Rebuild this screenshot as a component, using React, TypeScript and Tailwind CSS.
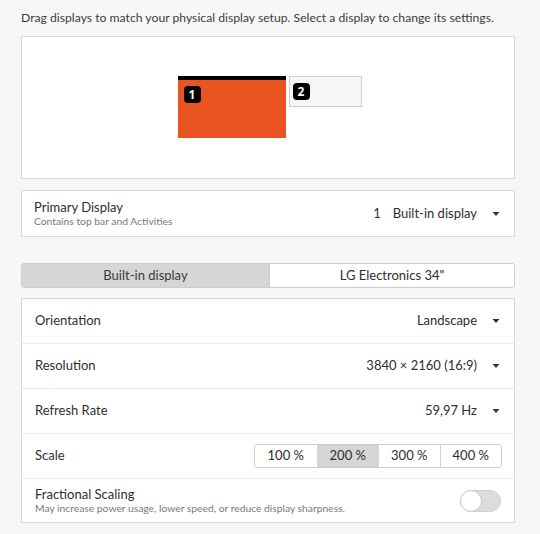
import React from "react";

const Caret = () => (
  <svg width="10" height="6" viewBox="0 0 10 6" className="ml-[14px]">
    <path d="M1.5 1h7L5 5z" fill="#333" />
  </svg>
);

function Row({ label, children, last }: { label: string; children: React.ReactNode; last?: boolean }) {
  return (
    <div className={`flex h-[45px] items-center justify-between pl-[13px] pr-[13px] ${last ? "" : "border-b border-[#ececec]"}`}>
      <span className="text-[13px] text-[#2e2e2e]">{label}</span>
      <div className="flex items-center">{children}</div>
    </div>
  );
}

export default function App() {
  const scales = ["100 %", "200 %", "300 %", "400 %"];
  return (
    <div className="h-[534px] w-[540px] overflow-hidden bg-[#f7f7f7] pl-[21px] pr-[25px] pt-[9px] font-['Lato','Noto_Sans',sans-serif] text-[#2e2e2e]">
      <p className="whitespace-nowrap text-[12.2px] leading-[18px] text-[#3c3c3c]">
        Drag displays to match your physical display setup. Select a display to change its settings.
      </p>

      {/* arrangement canvas */}
      <div className="mt-[9px] flex h-[143px] justify-center border border-[#d8d8d8] bg-white pt-[39px]">
        <div className="flex items-start pl-[3px]">
          <div className="h-[62px] w-[108px] border-t-[4px] border-black bg-[#e95420] pl-[6px] pt-[6px]">
            <div className="flex h-[17px] w-[17px] items-center justify-center rounded-[4px] bg-black font-['Noto_Sans',sans-serif] text-[12px] font-bold leading-none text-white">
              1
            </div>
          </div>
          <div className="ml-[3px] h-[31px] w-[73px] border border-[#cfcfcf] bg-[#f6f6f6] pl-[3px] pt-[6px]">
            <div className="flex h-[17px] w-[17px] items-center justify-center rounded-[4px] bg-black font-['Noto_Sans',sans-serif] text-[12px] font-bold leading-none text-white">
              2
            </div>
          </div>
        </div>
      </div>

      {/* primary display */}
      <div className="mt-[11px] flex h-[47px] items-center justify-between border border-[#d8d8d8] bg-white pl-[12px] pr-[13px]">
        <div className="flex flex-col">
          <span className="text-[13px] leading-[15px] text-[#2e2e2e]">Primary Display</span>
          <span className="text-[10.3px] leading-[13px] text-[#7a7a7a]">Contains top bar and Activities</span>
        </div>
        <div className="flex items-center text-[13px]">
          <span className="mr-[12px]">1</span>
          <span>Built-in display</span>
          <Caret />
        </div>
      </div>

      {/* tabs */}
      <div className="mt-[26px] flex h-[25px] overflow-hidden rounded-[3px] border border-[#cdcdcd] text-[13px]">
        <div className="flex w-[248px] items-center justify-center border-r border-[#cdcdcd] bg-[#d6d6d6] text-[#3a3a3a]">
          Built-in display
        </div>
        <div className="flex flex-1 items-center justify-center bg-white">LG Electronics 34"</div>
      </div>

      {/* settings */}
      <div className="mt-[10px] border border-[#d8d8d8] bg-white">
        <Row label="Orientation">
          <span className="text-[13px]">Landscape</span>
          <Caret />
        </Row>
        <Row label="Resolution">
          <span className="text-[13px]">3840 × 2160 (16:9)</span>
          <Caret />
        </Row>
        <Row label="Refresh Rate">
          <span className="text-[13px]">59,97 Hz</span>
          <Caret />
        </Row>
        <Row label="Scale">
          <div className="mr-[-1px] flex h-[24px] overflow-hidden rounded-[3px] border border-[#cdcdcd] text-[13px]">
            {scales.map((s, i) => (
              <div
                key={s}
                className={`flex w-[61.5px] items-center justify-center ${i > 0 ? "border-l border-[#d4d4d4]" : ""} ${i === 1 ? "bg-[#d6d6d6]" : "bg-white"}`}
              >
                {s}
              </div>
            ))}
          </div>
        </Row>
        <div className="flex h-[43px] items-center justify-between pl-[13px] pr-[13px]">
          <div className="flex flex-col">
            <span className="text-[13px] leading-[15px]">Fractional Scaling</span>
            <span className="text-[10.3px] leading-[13px] text-[#7a7a7a]">
              May increase power usage, lower speed, or reduce display sharpness.
            </span>
          </div>
          <div className="relative h-[22px] w-[41px] rounded-full border border-[#cfcfcf] bg-[#dcdcdc]">
            <div className="absolute left-[-1px] top-[-1px] h-[22px] w-[22px] rounded-full border border-[#c8c8c8] bg-white" />
          </div>
        </div>
      </div>
    </div>
  );
}
